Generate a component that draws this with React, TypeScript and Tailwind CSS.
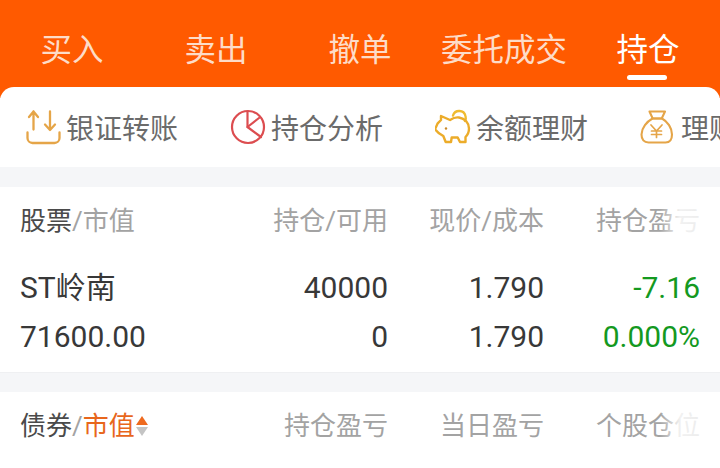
const font = { fontFamily: '"Roboto", "Noto Sans CJK SC", sans-serif' };

function Transfer() {
  return (
    <svg width="36" height="36" viewBox="-1 -1 36 36" fill="none" stroke="#e5a548" strokeWidth="2.3" strokeLinecap="round" strokeLinejoin="round" className="shrink-0">
      <path d="M1.500 22.500v5.500a5 5 0 0 0 5 5h22a5 5 0 0 0 5-5v-5.500" />
      <path d="M7.500 19.500V1.500M3 7l4.500-5.500L12 7" />
      <path d="M24 1.500v18.500M19 14.500l5 5.500 5-5.500" />
    </svg>
  );
}
function Pie() {
  return (
    <svg width="36" height="36" viewBox="0 -1 36 36" fill="none" stroke="#dc4d50" strokeWidth="2.2" strokeLinejoin="round" strokeLinecap="round" className="shrink-0">
      <circle cx="18" cy="17" r="16" />
      <path d="M17.500 1.500V17l13.500 10" />
      <path d="M17.500 17 29 8" />
    </svg>
  );
}
function Pig() {
  return (
    <svg width="36" height="36" viewBox="0 -1 36 36" fill="none" stroke="#ecac2a" strokeWidth="2.400" strokeLinejoin="round" strokeLinecap="round" className="shrink-0">
      <path d="M18 5.500A6.500 6.500 0 0 1 30.500 6a6.500 6.500 0 0 1-.5 5" stroke="#efbb30" />
      <path d="M6 6l9 4c3-2 6-3 9-2.500 6 1 10 5.500 10 11 0 3.500-1.500 6.500-3.500 8.500v5h-5.500l-2.300-4.500h-6l-.7 4.500h-5.300l-2.400-6-4.300-2.700-4-4 2.700-6 3.300-3.300z" />
      <circle cx="11" cy="18.500" r="1.200" fill="#c98a2c" stroke="none" />
    </svg>
  );
}
function Bag() {
  return (
    <svg width="36" height="36" viewBox="-1 -1 36 36" fill="none" stroke="#e5a548" strokeWidth="2.100" strokeLinejoin="round" strokeLinecap="round" className="shrink-0">
      <path d="M8.500 1.500h15.500l-3.300 7h-9z" />
      <path d="M11.500 8.500h9.500c5.500 3 10 9.500 10 16 0 5-2.500 8-6.500 8h-17C3 32.500.5 29.500.5 24.500c0-6.500 5.500-13 11-16z" />
      <path d="M10 15l5.500 6 5.500-6M10.500 21h10M10.500 24.500h10M15.500 21v6.500" strokeWidth="1.700" />
    </svg>
  );
}

const tabs = ["买入", "卖出", "撤单", "委托成交", "持仓"];
const tools = [
  { icon: <Transfer />, label: "银证转账" },
  { icon: <Pie />, label: "持仓分析" },
  { icon: <Pig />, label: "余额理财" },
  { icon: <Bag />, label: "理财产品" },
];

function HeaderRow({ children }: { children: React.ReactNode }) {
  return (
    <div className="relative grid grid-cols-[1fr_156px_156px_156px] pl-5 pr-[20px] h-[66px] pt-[2px] items-center text-[26px] text-[#a3a3a3]">
      {children}
      <div className="absolute right-[20px] top-4 h-[36px] w-[40px] bg-gradient-to-r from-transparent via-white/85 to-white/80" />
    </div>
  );
}

export default function App() {
  return (
    <div style={font} className="w-[720px] h-[468px] overflow-hidden bg-[#f5f6f8]">
      <div className="bg-[#ff5a00] h-[98px] grid grid-cols-5 text-center">
        {tabs.map((t, i) => (
          <div key={t} className="relative">
            <div className={`pt-[28px] text-[31.500px] leading-[46px] ${i === 4 ? "text-white" : "text-[#fddcc8]"}`}>{t}</div>
            {i === 4 && <div className="absolute left-[51px] top-[75px] w-[40px] h-[5px] rounded-full bg-white" />}
          </div>
        ))}
      </div>
      <div className="-mt-[11px] relative bg-white rounded-t-[14px] h-[80px] overflow-hidden flex items-center pl-[25px]">
        {tools.map((t) => (
          <div key={t.label} className="flex items-center shrink-0 w-[205px]">
            {t.icon}
            <span className="ml-[5px] mt-[6px] text-[28px] text-[#6b6b6b] whitespace-nowrap">{t.label}</span>
          </div>
        ))}
      </div>
      <div className="mt-5 bg-white border-b border-[#eff0f2] h-[186px]">
        <HeaderRow>
          <div className="text-[#a3a3a3]"><span className="text-[#4a4a4a]">股票</span>/市值</div>
          <div className="text-right">持仓/可用</div>
          <div className="text-right">现价/成本</div>
          <div className="text-right">持仓盈亏</div>
        </HeaderRow>
        <div className="grid grid-cols-[1fr_156px_156px_156px] grid-rows-[49px_49px] pl-5 pr-[20px] pt-[10px] items-center text-[30px] leading-none text-[#383838]">
          <div>ST岭南</div>
          <div className="text-right">40000</div>
          <div className="text-right">1.790</div>
          <div className="text-right text-[#14991f]">-7.16</div>
          <div>71600.00</div>
          <div className="text-right">0</div>
          <div className="text-right">1.790</div>
          <div className="text-right text-[#14991f]">0.000%</div>
        </div>
      </div>
      <div className="mt-[19px] bg-white h-[80px]">
        <HeaderRow>
          <div className="flex items-center">
            <span className="text-[#4a4a4a]">债券</span>/<span className="text-[#e8661c]">市值</span>
            <span className="flex flex-col gap-[2px] ml-[1px]">
              <span className="w-0 h-0 border-x-[6px] border-x-transparent border-b-[9px] border-b-[#ee6a1f]" />
              <span className="w-0 h-0 border-x-[6px] border-x-transparent border-t-[9px] border-t-[#c4c4c4]" />
            </span>
          </div>
          <div className="text-right">持仓盈亏</div>
          <div className="text-right">当日盈亏</div>
          <div className="text-right">个股仓位</div>
        </HeaderRow>
      </div>
    </div>
  );
}
